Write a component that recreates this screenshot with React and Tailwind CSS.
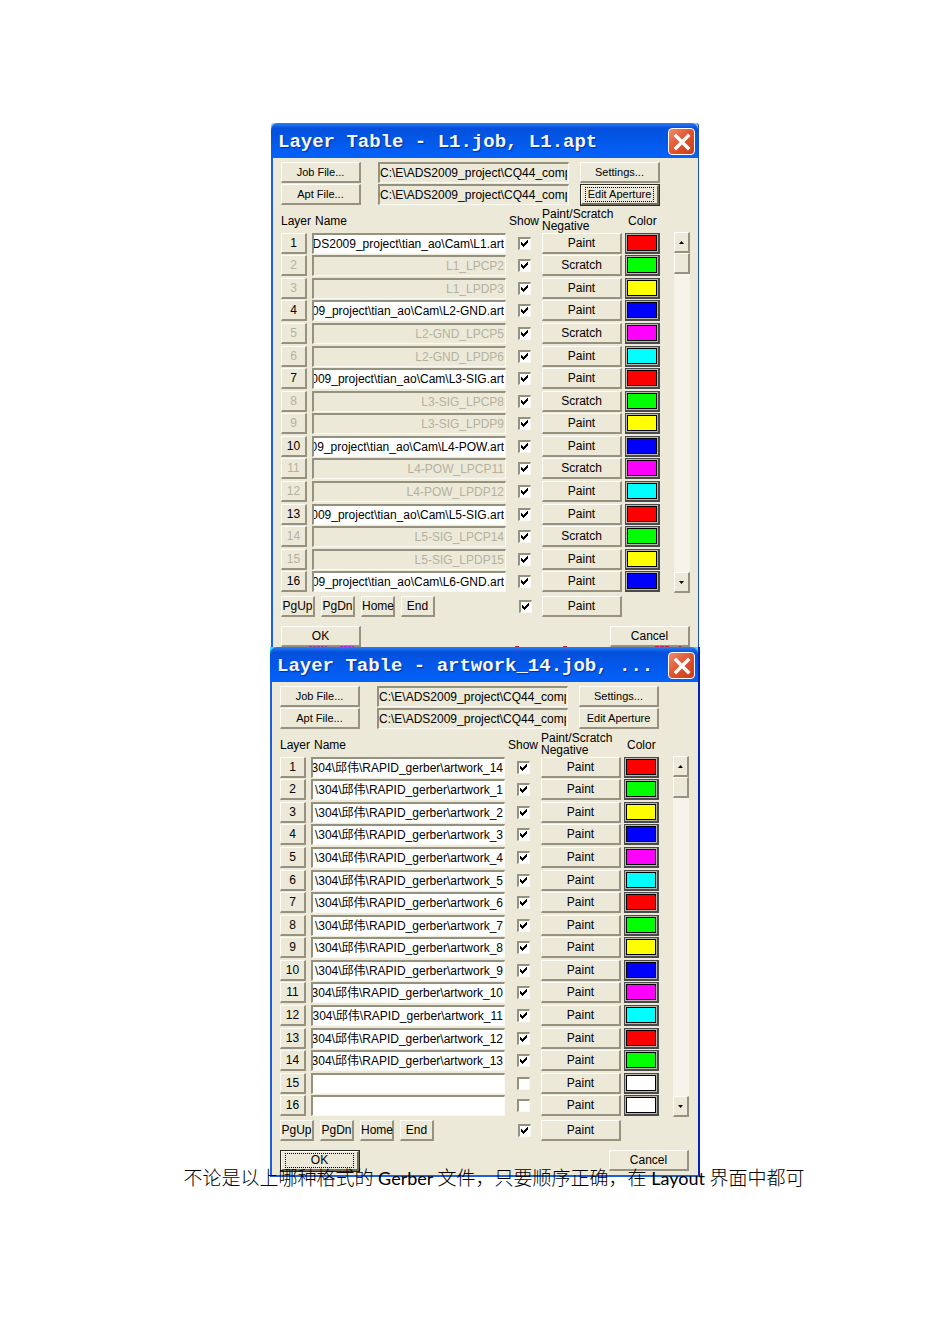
import React from 'react';

const COLORS = ['#ff0000', '#00ff00', '#ffff00', '#0000ff', '#ff00ff', '#00ffff'];

const jobRows = [
  ['\\DS2009_project\\tian_ao\\Cam\\L1.art', 'Paint'],
  ['L1_LPCP2', 'Scratch', true],
  ['L1_LPDP3', 'Paint', true],
  ['009_project\\tian_ao\\Cam\\L2-GND.art', 'Paint'],
  ['L2-GND_LPCP5', 'Scratch', true],
  ['L2-GND_LPDP6', 'Paint', true],
  ['2009_project\\tian_ao\\Cam\\L3-SIG.art', 'Paint'],
  ['L3-SIG_LPCP8', 'Scratch', true],
  ['L3-SIG_LPDP9', 'Paint', true],
  ['09_project\\tian_ao\\Cam\\L4-POW.art', 'Paint'],
  ['L4-POW_LPCP11', 'Scratch', true],
  ['L4-POW_LPDP12', 'Paint', true],
  ['2009_project\\tian_ao\\Cam\\L5-SIG.art', 'Paint'],
  ['L5-SIG_LPCP14', 'Scratch', true],
  ['L5-SIG_LPDP15', 'Paint', true],
  ['009_project\\tian_ao\\Cam\\L6-GND.art', 'Paint'],
].map(([name, mode, disabled], i) => ({ name, mode, disabled, show: true, color: COLORS[i % 6] }));

const artworkRows = Array.from({ length: 16 }, (_, i) => {
  const used = i < 14;
  const lead = i === 0 || i > 9 ? '304' : '\\304';
  return {
    name: used ? `${lead}\\邱伟\\RAPID_gerber\\artwork_${i === 0 ? 14 : i}` : '',
    mode: 'Paint',
    disabled: false,
    show: used,
    color: used ? COLORS[i % 6] : '#ffffff',
  };
});

const RAISED =
  'block h-[21px] bg-[#ece9d8] border-t border-l border-t-[#fffef8] border-l-[#fffef8] border-r-2 border-b-2 border-r-[#96927f] border-b-[#96927f] text-center whitespace-nowrap leading-[18px] p-0';
const SUNKEN =
  'flex h-[21px] overflow-hidden border-t-2 border-l-2 border-t-[#95917f] border-l-[#95917f] border-r border-b border-r-[#fbfaf2] border-b-[#fbfaf2]';

function Button({ children, className = '', focused = false, ...rest }) {
  if (focused) {
    return (
      <button
        type="button"
        className={`block h-[22px] border border-[#2b2a25] bg-[#ece9d8] p-0 ${className}`}
        {...rest}
      >
        <span className="flex h-full items-center border-t border-l border-r-2 border-b-2 border-t-[#fffef8] border-l-[#fffef8] border-r-[#6f6c5e] border-b-[#6f6c5e] px-[3px] py-px">
          <span className="h-[15px] flex-1 border border-dotted border-black leading-[13px] whitespace-nowrap">
            {children}
          </span>
        </span>
      </button>
    );
  }
  return (
    <button type="button" className={`${RAISED} ${className}`} {...rest}>
      {children}
    </button>
  );
}

function Check({ label, checked }) {
  return (
    <label className="relative mx-auto block size-[13px]">
      <input
        type="checkbox"
        defaultChecked={checked}
        aria-label={label}
        className="peer block size-[13px] appearance-none border-t-2 border-l-2 border-r border-b border-t-[#95917f] border-l-[#95917f] border-r-[#fbfaf2] border-b-[#fbfaf2] bg-white"
      />
      <svg
        viewBox="0 0 13 13"
        className="pointer-events-none absolute inset-0 hidden size-[13px] peer-checked:block"
        shapeRendering="crispEdges"
      >
        <path d="M3 5h1v1h1v1h1v-1h1v-1h1v-1h1v-1h1v3h-1v1h-1v1h-1v1h-1v1h-1v-1h-1v-1h-1z" fill="#000" />
      </svg>
    </label>
  );
}

function TitleBar({ title }) {
  return (
    <header className="flex h-[35px] items-center justify-between rounded-t-[7px] bg-linear-to-b from-[#2a7df5] from-0% via-[#0450dc] via-15% to-[#0362fa] pt-0.5 pr-[3px] pl-[7px]">
      <h2 className="font-['Liberation_Mono',monospace] text-[19px] leading-[26px] font-bold whitespace-pre text-[#f4f6ff] [text-shadow:1px_1px_1px_#0a2f92]">
        {title}
      </h2>
      <button
        type="button"
        aria-label="Close"
        className="grid size-[27px] place-items-center rounded-[4px] border border-white bg-linear-to-br from-[#ee8a6c] via-[#e0522c] to-[#c5401c]"
      >
        <svg viewBox="0 0 24 24" className="size-[24px]">
          <path d="M6 6l12 12M18 6l-12 12" stroke="#fff" strokeWidth="3.4" strokeLinecap="square" />
        </svg>
      </button>
    </header>
  );
}

function FileRow({ button, action, focused }) {
  return (
    <div className="flex items-start">
      <Button className="w-20 text-[11px]">{button}</Button>
      <div className={`${SUNKEN} ml-[17px] w-[191px] pr-px`}>
        <input
          readOnly
          aria-label={button}
          defaultValue={'C:\\E\\ADS2009_project\\CQ44_comp'}
          className="w-full bg-transparent outline-none"
        />
      </div>
      <Button focused={focused} className="ml-[11px] w-20 text-[11px]">
        {action}
      </Button>
    </div>
  );
}

function ScrollBar() {
  return (
    <div className="flex w-4 flex-col bg-[#f5f3ea]">
      <button type="button" aria-label="Scroll up" className={`${RAISED} grid w-4 place-items-center`}>
        <svg viewBox="0 0 5 3" className="h-[3px] w-[5px]">
          <path d="M2.500 0L5 3H0z" />
        </svg>
      </button>
      <div className={`${RAISED} w-4`} />
      <button type="button" aria-label="Scroll down" className={`${RAISED} mt-auto grid w-4 place-items-center`}>
        <svg viewBox="0 0 5 3" className="h-[3px] w-[5px]">
          <path d="M0 0h5L2.500 3z" />
        </svg>
      </button>
    </div>
  );
}

function LayerTable({ rows }) {
  return (
    <div className="flex">
      <table className="h-[387px] w-[379px] table-fixed border-collapse">
        <colgroup>
          <col className="w-[31px]" />
          <col className="w-[194px]" />
          <col className="w-[36px]" />
          <col className="w-[83px]" />
          <col className="w-[35px]" />
        </colgroup>
        <thead>
          <tr className="h-[26px] text-left whitespace-nowrap">
            <th className="p-0 pt-1 font-normal">Layer</th>
            <th className="p-0 pt-1 pl-[3px] font-normal">Name</th>
            <th className="p-0 pt-1 pl-[3px] font-normal">Show</th>
            <th className="p-0 pt-0.5 leading-[12px] font-normal">
              Paint/Scratch
              <br />
              Negative
            </th>
            <th className="p-0 pt-1 pl-[3px] font-normal">Color</th>
          </tr>
        </thead>
        <tbody>
          {rows.map((row, i) => (
            <tr key={i}>
              <td className="p-0">
                <Button
                  disabled={row.disabled}
                  className={row.disabled ? 'w-[26px] text-[#b5b1a0]' : 'w-[26px]'}
                >
                  {i + 1}
                </Button>
              </td>
              <td className="p-0">
                <div className={`${SUNKEN} justify-end pr-px ${row.disabled ? '' : 'bg-white'}`}>
                  <input
                    aria-label={`Layer ${i + 1} name`}
                    defaultValue={row.name}
                    disabled={row.disabled}
                    className="w-[240px] shrink-0 bg-transparent text-right outline-none disabled:text-[#b5b1a0]"
                  />
                </div>
              </td>
              <td className="p-0">
                <Check label={`Show layer ${i + 1}`} checked={row.show} />
              </td>
              <td className="p-0">
                <Button className="w-20">{row.mode}</Button>
              </td>
              <td className="p-0">
                <button
                  type="button"
                  aria-label={`Layer ${i + 1} color`}
                  className="block h-[21px] w-full border-t border-l border-r-2 border-b-2 border-[#4a4a4c] bg-[#b9b7ac] p-px"
                >
                  <span
                    className="block h-full border border-black"
                    style={{ backgroundColor: row.color }}
                  />
                </button>
              </td>
            </tr>
          ))}
        </tbody>
      </table>
      <div className="mt-[26px] ml-[14px] flex">
        <ScrollBar />
      </div>
    </div>
  );
}

function LayerDialog({ title, rows, editFocused, okFocused, className, children }) {
  return (
    <section className={className}>
      <TitleBar title={title} />
      <div className="border-l-2 border-l-[#1c5fe0] bg-[#ece9d8] pt-1 pl-2">
        <div className="flex h-[44px] flex-col gap-px">
          <FileRow button="Job File..." action="Settings..." />
          <FileRow button="Apt File..." action="Edit Aperture" focused={editFocused} />
        </div>
        <LayerTable rows={rows} />
        <div className="mt-[3px] flex w-[341px] items-center gap-[6px]">
          {['PgUp', 'PgDn', 'Home', 'End'].map((key) => (
            <Button key={key} className="w-[34px]">
              {key}
            </Button>
          ))}
          <div className="mr-1 ml-auto">
            <Check label="Show all layers" checked />
          </div>
          <Button className="w-20">Paint</Button>
        </div>
        <div className="mt-[9px] flex w-[409px] justify-between pb-[3px]">
          <Button focused={okFocused} className="w-20">
            OK
          </Button>
          <Button className="w-20">Cancel</Button>
        </div>
      </div>
      {children}
    </section>
  );
}

export default function App() {
  return (
    <main className="flex min-h-screen flex-col items-center bg-white pt-[123px] pl-5 font-['Liberation_Sans','Noto_Sans_CJK_SC',sans-serif] text-xs text-black">
      <LayerDialog
        title="Layer Table - L1.job, L1.apt"
        rows={jobRows}
        editFocused
        className="relative h-[524px] w-[428px] overflow-hidden rounded-t-[3px] border-r border-r-[#1d4fc4] bg-[#9db4dc]"
      >
        <svg viewBox="0 0 428 1" className="absolute bottom-0 left-0 h-px w-[428px]">
          <path d="M38 .5h18M69 .5h14" stroke="#b030c0" strokeDasharray="3 1" />
          <path d="M244 .5h4M292 .5h4M384 .5h14M408 .5h2" stroke="#c02050" strokeDasharray="4 1" />
        </svg>
      </LayerDialog>
      <LayerDialog
        title="Layer Table - artwork_14.job, ..."
        rows={artworkRows}
        okFocused
        className="w-[430px] border-r-2 border-b-2 border-r-[#0523b4] border-b-[#1c5fe0] bg-[#22e4fa]"
      />
      <p className="relative -mt-3 ml-[18px] pb-36 font-['Lato','Noto_Sans_CJK_SC',sans-serif] text-[18px] leading-[26px] whitespace-nowrap">
        <span className="text-[19px] font-light">不论是以上哪种格式的</span> Gerber{' '}
        <span className="text-[19px] font-light">文件，只要顺序正确，在</span> Layout{' '}
        <span className="text-[19px] font-light">界面中都可</span>
      </p>
    </main>
  );
}
